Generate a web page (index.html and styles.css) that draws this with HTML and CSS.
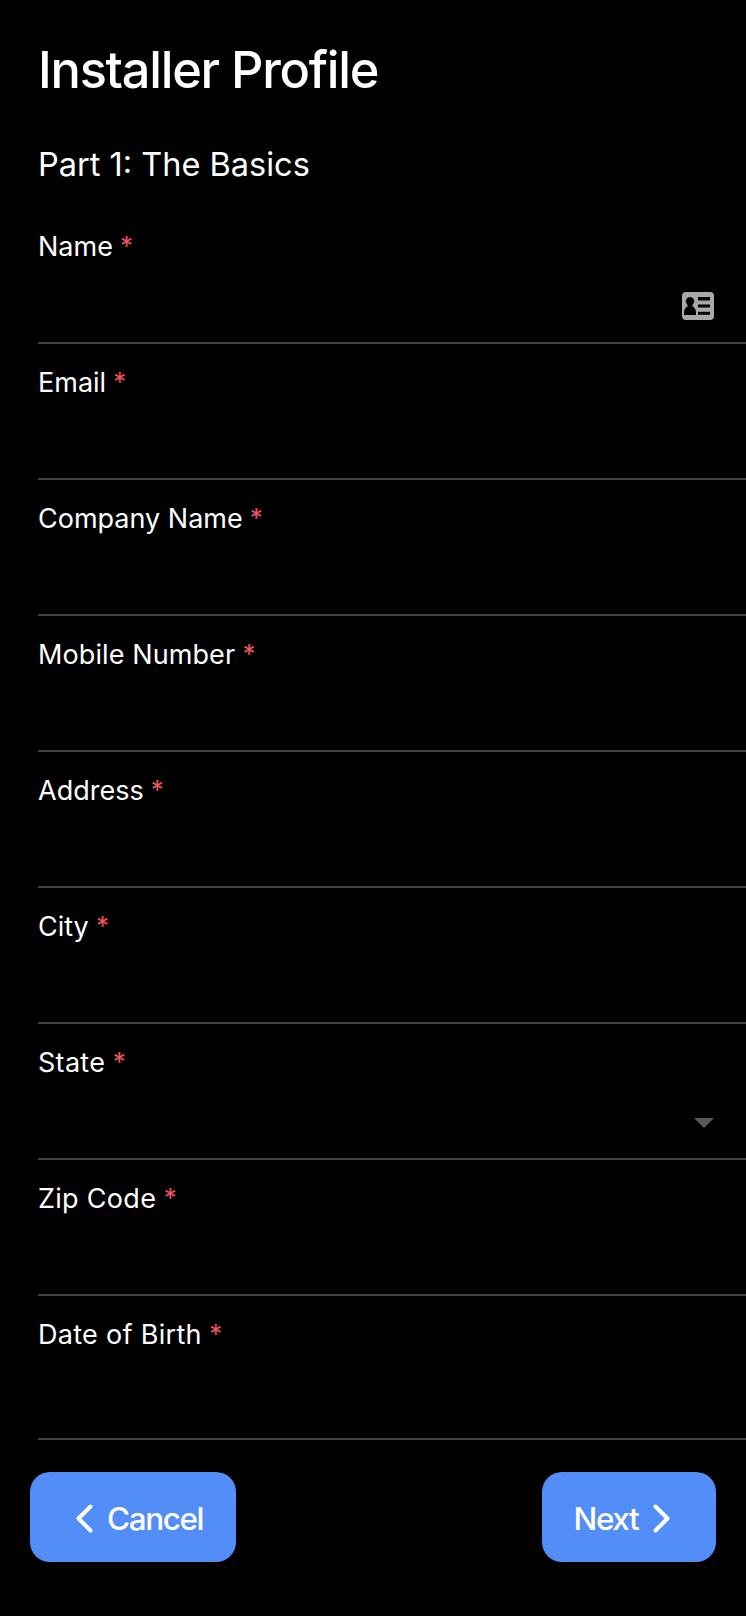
FILE: index.html
```
<!DOCTYPE html>
<html lang="en">
<head>
<meta charset="utf-8">
<title>Installer Profile</title>
<link rel="stylesheet" href="styles.css">
</head>
<body>
<main class="page">
  <h1 class="title">Installer Profile</h1>
  <h2 class="subtitle">Part 1: The Basics</h2>
  <form class="form">
    <div class="field">
      <label class="label">Name <span class="required">*</span></label>
      <svg class="contact-icon" width="32" height="28" viewBox="0 0 32 28">
        <rect width="32" height="28" rx="4" fill="#a9a9a9"/>
        <circle cx="8" cy="9.200" r="4.200"/>
        <path d="M2 23v-2c0-3.500 1.400-5.700 3.600-7L6 11h4l.4 3c2.200 1.300 3.600 3.500 3.600 7v2z"/>
        <path d="M16 5h12v3.500H16zM16 12.500h12v3H16zM16 19.800h12v3H16z"/>
      </svg>
    </div>
    <div class="field"><label class="label">Email <span class="required">*</span></label></div>
    <div class="field"><label class="label">Company Name <span class="required">*</span></label></div>
    <div class="field"><label class="label label-number">Mobile Number <span class="required">*</span></label></div>
    <div class="field"><label class="label">Address <span class="required">*</span></label></div>
    <div class="field"><label class="label">City <span class="required">*</span></label></div>
    <div class="field">
      <label class="label label-loose">State <span class="required">*</span></label>
      <svg class="caret-icon" width="20" height="10" viewBox="0 0 20 10"><path d="M0 0h20L10 10z" fill="#595959"/></svg>
    </div>
    <div class="field"><label class="label label-loose">Zip Code <span class="required">*</span></label></div>
    <div class="field field-date"><label class="label label-loose">Date of Birth <span class="required">*</span></label></div>
  </form>
  <footer class="actions">
    <button class="button cancel" type="button">
      <svg width="17" height="29" viewBox="0 0 17 29"><path d="M14.500 2.500L2.500 14.500l12 12"/></svg>
      <span class="button-text">Cancel</span>
    </button>
    <button class="button next" type="button">
      <span class="button-text">Next</span>
      <svg width="17" height="29" viewBox="0 0 17 29"><path d="M2.500 2.500l12 12-12 12"/></svg>
    </button>
  </footer>
</main>
</body>
</html>
```
FILE: styles.css
```
* { box-sizing: border-box; }

body {
  margin: 0;
  background: #000;
  color: #fff;
  font-family: Inter, "Liberation Sans", sans-serif;
}

.page {
  height: 1616px;
  padding-top: 40px;
  overflow: hidden;
}

.title {
  margin: 0 0 0 38px;
  height: 60px;
  line-height: 60px;
  font-size: 50.500px;
  font-weight: 550;
  letter-spacing: -1.250px;
  white-space: nowrap;
}

.subtitle {
  margin: 45px 0 23px 38px;
  height: 40px;
  line-height: 40px;
  font-size: 32.500px;
  font-weight: 400;
  white-space: nowrap;
}

.form { margin-left: 38px; }

.field {
  display: flex;
  flex-direction: column;
  justify-content: space-between;
  height: 136px;
  padding-top: 21px;
  border-bottom: 2px solid #444;
}

.field-date { height: 144px; }

.label {
  height: 36px;
  line-height: 36px;
  font-size: 27px;
  white-space: nowrap;
}

.label-number { letter-spacing: 0.100px; }

.label-loose { letter-spacing: 0.300px; }

.required {
  margin-left: -0.500px;
  color: #eb5361;
  font-size: 26px;
  line-height: 1;
  vertical-align: 1px;
}

.contact-icon {
  align-self: flex-end;
  margin: 0 32px 22px 0;
}

.caret-icon {
  align-self: flex-end;
  margin: 0 32px 30px 0;
}

.actions {
  display: flex;
  justify-content: space-between;
  padding: 32px 30px 0;
}

.button {
  display: flex;
  align-items: center;
  height: 90px;
  padding: 2px 0 0;
  border: 0;
  border-radius: 20px;
  background: #528df8;
  color: #fff;
  font-family: inherit;
  font-size: 31.500px;
  font-weight: 450;
  line-height: 40px;
  letter-spacing: -1.400px;
  white-space: nowrap;
}

.button-text { padding-top: 2px; }

.button path {
  fill: none;
  stroke: #fff;
  stroke-width: 4;
  stroke-linecap: round;
  stroke-linejoin: round;
}

.cancel {
  width: 206px;
  padding-left: 45.500px;
  gap: 14.500px;
}

.next {
  width: 174px;
  padding-left: 31.500px;
  gap: 15px;
}
```
